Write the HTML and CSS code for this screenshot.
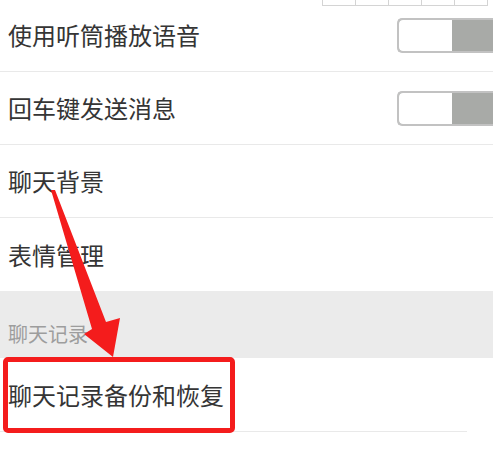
FILE: index.html
```html
<!DOCTYPE html>
<html lang="zh-CN">
<head>
  <meta charset="UTF-8">
  <meta name="viewport" content="width=device-width, initial-scale=1.0">
  <title>聊天设置</title>
  <link rel="stylesheet" href="styles.css">
</head>
<body>
  <div class="keys">
    <span></span><span></span><span></span><span></span><span></span>
  </div>

  <div class="settings">
    <div class="row">
      <span class="label">使用听筒播放语音</span>
      <div class="switch"><div class="knob"></div></div>
    </div>
    <div class="row">
      <span class="label">回车键发送消息</span>
      <div class="switch"><div class="knob"></div></div>
    </div>
    <div class="row">
      <span class="label">聊天背景</span>
    </div>
    <div class="row last">
      <span class="label">表情管理</span>
    </div>

    <div class="section-title">聊天记录</div>

    <div class="row short">
      <span class="label">聊天记录备份和恢复</span>
    </div>
    <div class="row empty"></div>
  </div>

  <!-- annotation drawn over the screenshot -->
  <div class="highlight"></div>
  <svg class="arrow" width="493" height="457" viewBox="0 0 493 457">
    <polygon points="51,190 55,190 106,322 120,318 113,357 84,334 92,329" fill="#f41c1c"/>
  </svg>
</body>
</html>
```

FILE: styles.css
```css
body {
  margin: 0;
  background-color: #ffffff;
  font-family: "Noto Sans CJK SC", "Noto Sans", sans-serif;
  width: 493px;
  height: 457px;
  overflow: hidden;
  position: relative;
}
.keys {
  position: absolute;
  top: 0;
  left: 322px;
  display: flex;
  border-left: 1px solid #d4d4d4;
  border-bottom: 1px solid #d4d4d4;
}
.keys span {
  width: 32px;
  height: 5px;
  border-right: 1px solid #d4d4d4;
}
.settings {
  margin-top: -1px;
}
.row {
  height: 72px;
  border-bottom: 1px solid #e9e9e9;
  display: flex;
  align-items: center;
  justify-content: space-between;
  padding-left: 8px;
}
.row.last {
  border-bottom: none;
  height: 73px;
}
.row.short {
  height: 73px;
  margin-right: 26px;
}
.row.empty {
  border-bottom: none;
}
.label {
  font-size: 24px;
  color: #353535;
  line-height: 1;
}
.switch {
  width: 98px;
  height: 31px;
  border: 2px solid #c2c2c2;
  border-right: none;
  border-radius: 5px 0 0 5px;
  background-color: #a8aaa7;
  margin-right: -4px;
  display: flex;
}
.knob {
  width: 53px;
  height: 100%;
  background-color: #ffffff;
  border-radius: 4px 0 0 4px;
}
.section-title {
  height: 67px;
  background-color: #ebebeb;
  box-sizing: border-box;
  padding: 0 0 10px 8px;
  display: flex;
  align-items: flex-end;
  font-size: 20px;
  color: #9d9d9d;
}
.highlight {
  position: absolute;
  left: 3px;
  top: 357px;
  width: 222px;
  height: 66px;
  border: 5px solid #f41c1c;
  border-radius: 5px;
}
.arrow {
  position: absolute;
  left: 0;
  top: 0;
}
```
